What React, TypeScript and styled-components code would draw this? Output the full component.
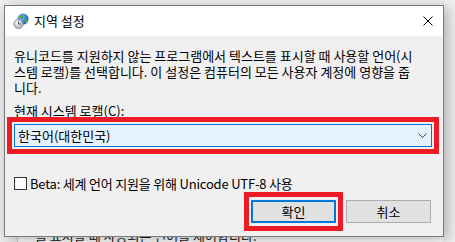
import React from "react";
import styled, { createGlobalStyle } from "styled-components";

const Global = createGlobalStyle`
  html, body { margin: 0; padding: 0; }
  body {
    width: 455px;
    height: 242px;
    overflow: hidden;
    background: #f0f0f0;
    font-family: "Noto Sans CJK KR", "Noto Sans", sans-serif;
    color: #000;
  }
`;

const Desktop = styled.div`
  position: relative;
  width: 455px;
  height: 242px;
  overflow: hidden;
  box-sizing: border-box;
  padding: 5px 0 0 4px;
  background: #f0f0f0;
`;

const BackWindow = styled.div`
  position: absolute;
  left: 17px;
  top: 36px;
  right: 12px;
  bottom: 0;
  background: #ffffff;
  border-left: 1px solid #d0d0d0;
  display: flex;
  flex-direction: column;
  justify-content: flex-end;
`;

const BackText = styled.div`
  font-size: 13px;
  line-height: 16px;
  padding-left: 17px;
  margin-bottom: -2px;
  white-space: nowrap;
  color: #1a1a1a;
`;

const Dialog = styled.div`
  position: relative;
  z-index: 1;
  width: 440px;
  box-sizing: border-box;
  border: 1px solid #7a7a7a;
  background: #f0f0f0;
  box-shadow: 3px 3px 14px rgba(0, 0, 0, 0.3);
`;

const TitleBar = styled.div`
  height: 30px;
  background: #ffffff;
  display: flex;
  align-items: center;
  padding: 0 10px 0 8px;
`;

const TitleIcon = styled.svg`
  width: 16px;
  height: 16px;
  flex: none;
  margin-right: 5px;
`;

const TitleText = styled.div`
  font-size: 13px;
  line-height: 16px;
  flex: 1;
`;

const CloseIcon = styled.svg`
  width: 10px;
  height: 10px;
  flex: none;
`;

const Body = styled.div`
  display: flex;
  flex-direction: column;
  padding: 12px 11px 13px 9px;
`;

const Description = styled.div`
  font-size: 13px;
  line-height: 16px;
`;

const Line = styled.div`
  white-space: nowrap;
`;

const Label = styled.div`
  margin-top: 7px;
  font-size: 13px;
  line-height: 16px;
`;

const Highlight = styled.div<{ $v: number; $h: number }>`
  border: 5px solid #ed1c24;
  padding: ${(p) => p.$v}px ${(p) => p.$h}px;
  margin: ${(p) => -(p.$v + 5)}px ${(p) => -(p.$h + 5)}px;
`;

const ComboHighlight = styled(Highlight)`
  margin-top: -2px;
`;

const Combo = styled.div`
  height: 23px;
  box-sizing: border-box;
  border: 1px solid #0078d7;
  background: #e5f1fb;
  display: flex;
  align-items: center;
  padding: 0 4px 0 3px;
  font-size: 13px;
`;

const ComboText = styled.span`
  flex: 1;
  white-space: nowrap;
`;

const Chevron = styled.svg`
  width: 9px;
  height: 5px;
  flex: none;
`;

const CheckRow = styled.label`
  margin-top: 28px;
  height: 16px;
  display: flex;
  align-items: center;
  font-size: 13px;
  letter-spacing: -0.2px;
  gap: 3px;
  white-space: nowrap;
`;

const CheckBox = styled.span`
  width: 13px;
  height: 13px;
  box-sizing: border-box;
  border: 1px solid #333333;
  background: #ffffff;
  flex: none;
`;

const ButtonRow = styled.div`
  margin-top: 9px;
  display: flex;
  justify-content: flex-end;
  gap: 10px;
  padding-right: 1px;
`;

const Button = styled.button<{ $default?: boolean }>`
  width: 85px;
  height: 23px;
  box-sizing: border-box;
  display: flex;
  align-items: center;
  justify-content: center;
  padding: 0;
  background: #e1e1e1;
  border: ${(p) => (p.$default ? "2px solid #0078d7" : "1px solid #adadad")};
  font-family: "Noto Sans CJK KR", "Noto Sans", sans-serif;
  font-size: 13px;
  color: #000;
`;

export default function App() {
  return (
    <>
      <Global />
      <Desktop>
        <BackWindow>
          <BackText>를 표시할 때 사용되는 언어를 제어합니다.</BackText>
        </BackWindow>
        <Dialog>
          <TitleBar>
            <TitleIcon viewBox="0 0 16 16">
              <defs>
                <radialGradient id="g" cx="0.35" cy="0.35" r="0.7">
                  <stop offset="0" stopColor="#7fc4ff" />
                  <stop offset="1" stopColor="#1458b8" />
                </radialGradient>
                <radialGradient id="c" cx="0.4" cy="0.35" r="0.7">
                  <stop offset="0" stopColor="#ffffff" />
                  <stop offset="1" stopColor="#9aa4ad" />
                </radialGradient>
              </defs>
              <circle cx="10" cy="6" r="5.5" fill="url(#g)" />
              <path d="M6.5 3.5 Q8 1.5 10 2 Q9 3.5 10.5 4.5 Q9.5 6 8 5.5 Q7 5 6.5 3.5Z" fill="#3fae3a" />
              <path d="M11.5 6.5 Q13.5 6 15 7.5 Q14 10 12 10.5 Q12.5 8.5 11.5 6.5Z" fill="#3fae3a" />
              <circle cx="5.5" cy="11" r="4.6" fill="url(#c)" stroke="#7d8790" strokeWidth="0.8" />
              <path d="M5.5 8.3 V11 H7.6" stroke="#3a3f44" strokeWidth="0.9" fill="none" />
            </TitleIcon>
            <TitleText>지역 설정</TitleText>
            <CloseIcon viewBox="0 0 10 10">
              <path d="M0.5 0.5 L9.5 9.5 M9.5 0.5 L0.5 9.5" stroke="#000" strokeWidth="1" />
            </CloseIcon>
          </TitleBar>
          <Body>
            <Description>
              <Line>유니코드를 지원하지 않는 프로그램에서 텍스트를 표시할 때 사용할 언어(시</Line>
              <Line>스템 로캘)를 선택합니다. 이 설정은 컴퓨터의 모든 사용자 계정에 영향을 줍</Line>
              <Line>니다.</Line>
            </Description>
            <Label>현재 시스템 로캘(C):</Label>
            <ComboHighlight $v={2} $h={2}>
              <Combo>
                <ComboText>한국어(대한민국)</ComboText>
                <Chevron viewBox="0 0 9 5">
                  <path d="M0.5 0.5 L4.5 4.5 L8.5 0.5" stroke="#404040" strokeWidth="1" fill="none" />
                </Chevron>
              </Combo>
            </ComboHighlight>
            <CheckRow>
              <CheckBox />
              <span>Beta: 세계 언어 지원을 위해 Unicode UTF-8 사용</span>
            </CheckRow>
            <ButtonRow>
              <Highlight $v={3} $h={2}>
                <Button $default>확인</Button>
              </Highlight>
              <Button>취소</Button>
            </ButtonRow>
          </Body>
        </Dialog>
      </Desktop>
    </>
  );
}
